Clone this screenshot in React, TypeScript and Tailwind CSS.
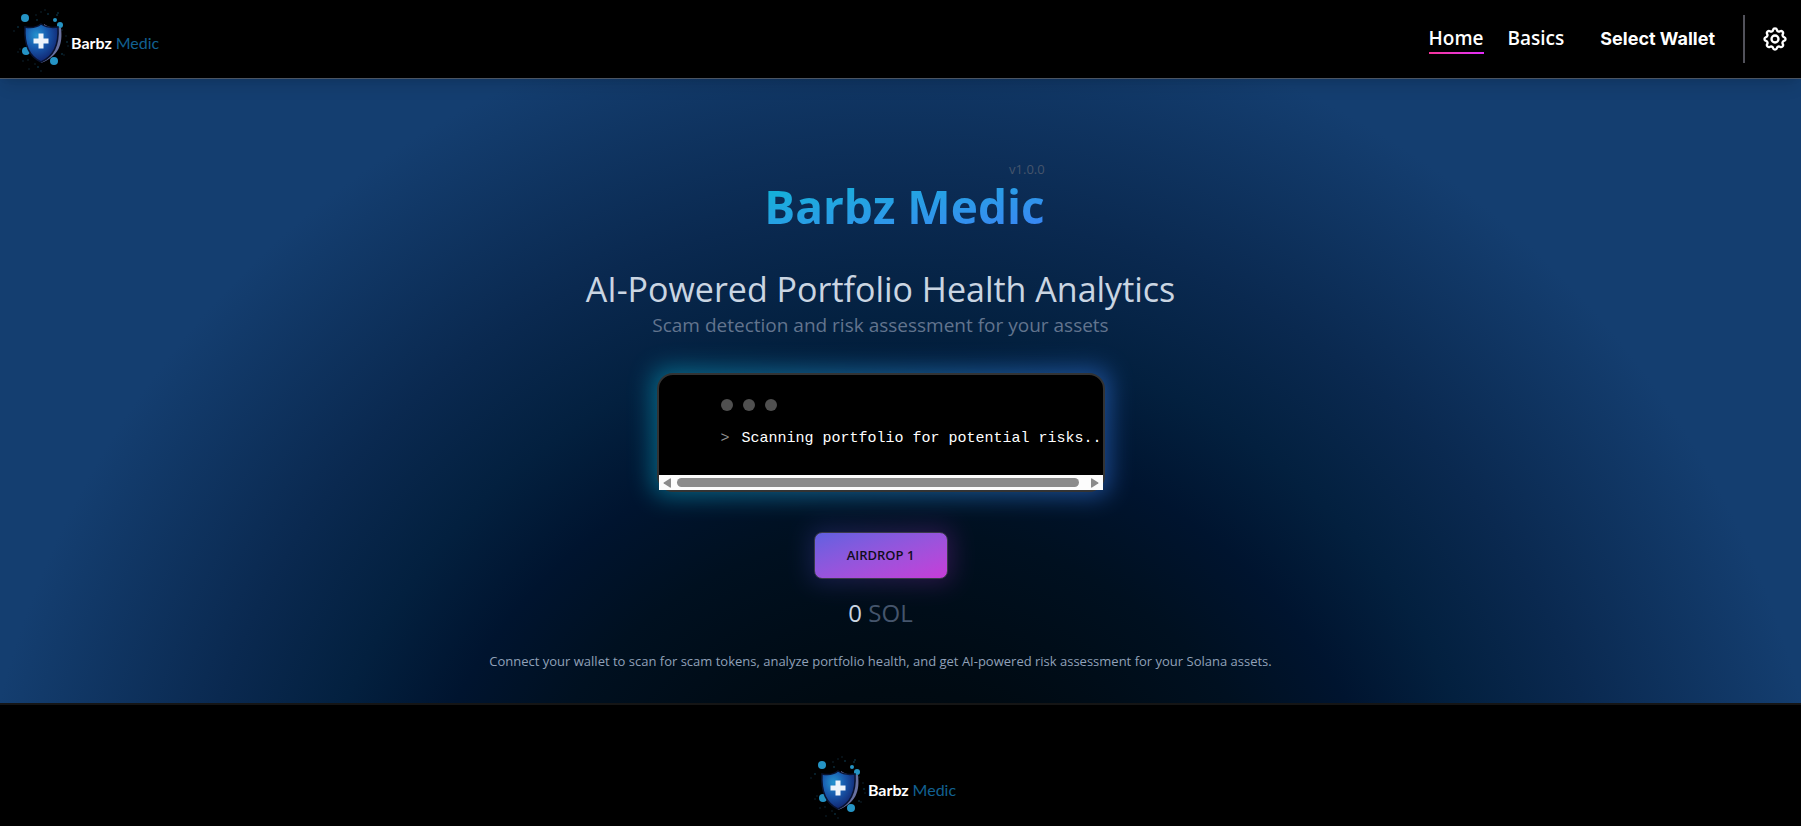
import { useId } from "react";

const bubbles: [number, number, number][] = [
  [25, 18, 4], [55, 20, 2], [60, 25, 3], [26, 51, 4], [54, 61, 4],
];

const specks: [number, number][] = [
  [18, 27], [14, 31], [28, 60], [38, 67], [41, 71], [66, 36], [67, 42], [20, 49], [18, 52], [62, 54],
  [36, 15], [45, 10], [58, 13], [35, 64], [64, 55], [57, 15], [29, 69], [23, 61], [48, 14], [41, 12], [68, 46], [37, 20], [62, 30],
];

function Logo() {
  const id = useId();
  return (
    <a href="#home" className="mt-0.5 flex h-16 items-center" aria-label="Barbz Medic">
      <svg viewBox="12 8 59 64" className="h-16 w-[59px]" aria-hidden="true">
        <defs>
          <radialGradient id={id} cx="0.35" cy="0.3" r="0.75">
            <stop offset="0" stopColor="#2593cf" />
            <stop offset="0.45" stopColor="#1859ad" />
            <stop offset="1" stopColor="#101f68" />
          </radialGradient>
        </defs>
        {specks.map(([x, y], i) => (
          <circle key={i} cx={x} cy={y} r="0.7" fill={i % 3 ? "#122e3f" : "#155775"} />
        ))}
        {bubbles.map(([x, y, r], i) => (
          <circle key={i} cx={x} cy={y} r={r} fill="#2594c5" />
        ))}
        <path d="M44 24C49 28 56 28 61 28C63 44 59 56 41 63Z" fill="#68709f" />
        <path d="M41 24C36 28 30 28 25 27C24 43 28 56 41 62C55 56 59 43 58 27C52 28 47 28 41 24Z" fill={`url(#${id})`} stroke="#091331" strokeWidth="1.5" />
        <path d="M38.500 33.500h5v5h5v5h-5v5h-5v-5h-5v-5h5z" fill="#eef4fb" />
      </svg>
      <span className="mt-1.5 font-[Lato,sans-serif] text-base font-bold text-white">
        Barbz <span className="font-normal text-[#126192]">Medic</span>
      </span>
    </a>
  );
}

export default function App() {
  return (
    <div className="flex min-h-screen flex-col bg-[radial-gradient(circle_at_50%_930px,#00060c_0,#000a12_240px,#001020_400px,#00142f_500px,#03203f_600px,#0a2950_720px,#143e70_930px)] font-['Open_Sans',sans-serif] text-slate-300">
      <header className="flex h-[79px] items-center justify-between border-b border-[#4b5563] bg-black pr-3 pl-3 shadow-lg">
        <Logo />
        <div className="flex items-center text-white">
          <nav className="flex items-start gap-6 text-[19px] leading-7 font-semibold">
            <a href="#home" className="flex flex-col">
              <span>Home</span>
              <span className="h-0.5 bg-gradient-to-r from-pink-500 to-fuchsia-500" />
            </a>
            <a href="#basics">Basics</a>
          </nav>
          <button className="ml-9 font-[Inter,sans-serif] text-lg font-bold">Select Wallet</button>
          <span className="ml-7 h-12 w-0.5 bg-[#52525b]" />
          <button className="ml-4" aria-label="Settings">
            <svg viewBox="0 0 24 24" className="size-7" fill="none" stroke="currentColor" strokeWidth="2" strokeLinejoin="round">
              <path d="M10.300 4.300c.4-1.800 3-1.800 3.400 0a1.700 1.700 0 0 0 2.600 1.100c1.500-1 3.300.8 2.400 2.400a1.700 1.700 0 0 0 1 2.500c1.800.5 1.800 3 0 3.400a1.700 1.700 0 0 0-1 2.600c.9 1.500-.9 3.300-2.400 2.400a1.700 1.700 0 0 0-2.600 1c-.4 1.800-3 1.800-3.400 0a1.700 1.700 0 0 0-2.600-1c-1.500.9-3.300-.9-2.400-2.400a1.700 1.700 0 0 0-1-2.600c-1.800-.4-1.800-2.900 0-3.400a1.700 1.700 0 0 0 1-2.500c-.9-1.600.9-3.400 2.400-2.400a1.700 1.700 0 0 0 2.600-1.100Z" />
              <circle cx="12" cy="12" r="3" />
            </svg>
          </button>
        </div>
      </header>

      <main className="flex flex-col items-center pt-20 pr-10 pb-8">
        <div className="ml-12 flex flex-col items-end">
          <span className="text-[13px] leading-5 text-slate-600">v1.0.0</span>
          <h1 className="bg-gradient-to-br from-[#06b6d4] to-[#3b82f6] bg-clip-text text-[46px] leading-[54px] font-bold text-transparent">Barbz Medic</h1>
        </div>
        <h2 className="mt-8 text-[34px] leading-[48px]">AI-Powered Portfolio Health Analytics</h2>
        <p className="text-[19px] leading-6 text-slate-500">Scam detection and risk assessment for your assets</p>

        <div className="relative mt-9 w-[448px] max-w-full">
          <div className="absolute -inset-1 rounded-xl bg-gradient-to-r from-[#06b6d4] to-[#3b82f6] opacity-50 blur-md" />
          <div className="relative rounded-2xl border-2 border-[#333333] bg-black">
            <div className="flex flex-col gap-4 overflow-hidden pt-6 pb-6 pl-[62px]">
              <div className="flex gap-2.5">
                <span className="size-3 rounded-full bg-[#505050]" />
                <span className="size-3 rounded-full bg-[#505050]" />
                <span className="size-3 rounded-full bg-[#505050]" />
              </div>
              <pre className="font-['Liberation_Mono',monospace] text-[15px] leading-6 text-white"><code><span className="mr-3 text-[#909090]">&gt;</span>Scanning portfolio for potential risks..</code></pre>
            </div>
            <div className="flex h-[15px] items-center gap-1.5 bg-[#fcfcfc] px-1">
              <svg viewBox="0 0 8 10" className="h-2.5 w-2" fill="#8b8b8b"><path d="M8 1v8q0 1-1 .5L.8 5.600q-.8-.6 0-1.200L7 .5q1-.5 1 .5Z" /></svg>
              <span className="mr-1.5 h-[9px] flex-1 rounded-full bg-[#8b8b8b]" />
              <svg viewBox="0 0 8 10" className="h-2.5 w-2" fill="#8b8b8b"><path d="M0 1v8q0 1 1 .5l6.200-3.900q.8-.6 0-1.200L1 .5Q0 0 0 1Z" /></svg>
            </div>
          </div>
        </div>

        <div className="relative mt-10">
          <div className="absolute -inset-1 rounded-lg bg-gradient-to-r from-indigo-500 to-fuchsia-500 opacity-20 blur-md" />
          <button className="relative h-[47px] w-[134px] rounded-lg border border-[#3a3a4a] bg-gradient-to-br from-[#6060e0] to-[#c63bd8] text-[13px] font-semibold text-[#110d1c]">AIRDROP 1</button>
        </div>

        <p className="mt-4 text-2xl leading-9">0 <span className="text-slate-600">SOL</span></p>
        <p className="mt-5 text-[13px] leading-5 text-slate-400">
          Connect your wallet to scan for scam tokens, analyze portfolio health, and get AI-powered risk assessment for your Solana assets.
        </p>
      </main>

      <footer className="flex flex-1 justify-center border-t-2 border-[#151515] bg-black pt-12 pr-9">
        <Logo />
      </footer>
    </div>
  );
}
